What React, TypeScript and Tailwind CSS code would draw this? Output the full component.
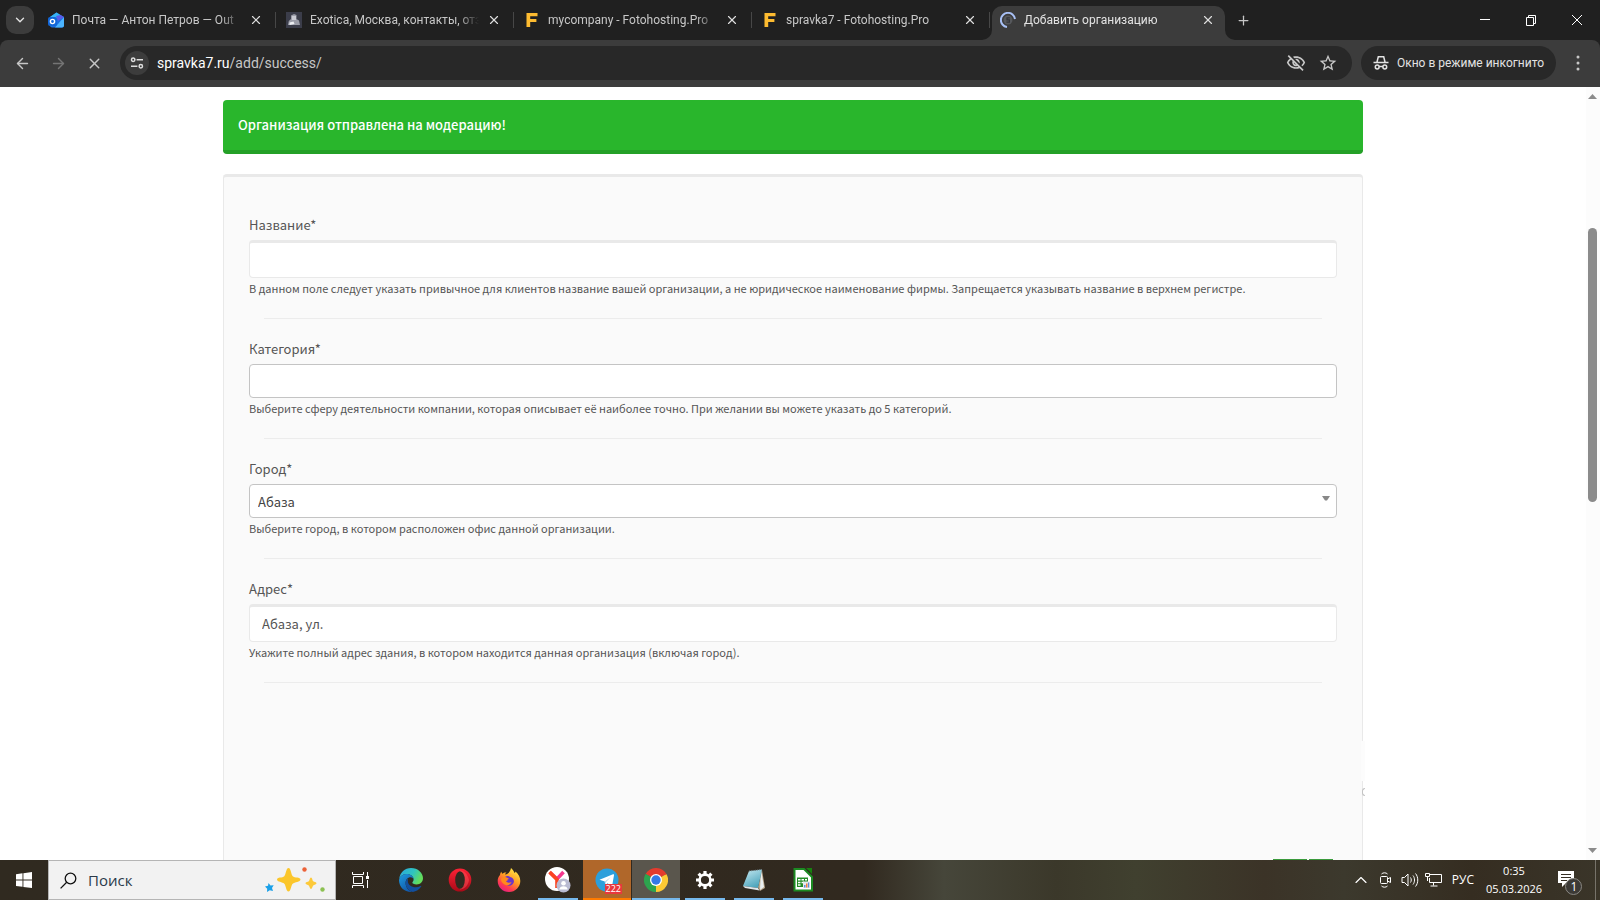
import type { ReactNode } from 'react';
import { ArrowLeft, ArrowRight, ChevronDown, ChevronUp, Plus, X } from 'lucide-react';
import { MdOutlineVisibilityOff, MdStarOutline } from 'react-icons/md';

/* ── Tab icons ─────────────────────────────────────────── */

function MailIcon() {
  return (
    <svg width="16" height="16" viewBox="0 0 16 16" aria-hidden="true">
      <path d="M2 5 8.5.6 16 5v8.5a2 2 0 0 1-2 2H4a2 2 0 0 1-2-2z" fill="#1b6fe0" />
      <path d="M2 5 8.5.6 13 3.4 5 9z" fill="#36b5f5" />
      <path d="M16 5v8.5a2 2 0 0 1-2 2H7z" fill="#4bb4ff" />
      <path d="m8 4 4.5-1L16 5l-6 4z" fill="#5a5be8" />
      <rect x="0" y="5" width="9" height="9" rx="2" fill="#1166d8" />
      <circle cx="4.5" cy="9.5" r="2.1" fill="none" stroke="#fff" strokeWidth="1.4" />
    </svg>
  );
}

function ExoticaIcon() {
  return (
    <svg width="16" height="16" viewBox="0 0 16 16" aria-hidden="true">
      <rect width="16" height="16" fill="#3b3d4a" />
      <path d="M5 3.5 8 2l2.5 1v4L13 8.5 14 13H2l.8-4L5 7z" fill="#9b9da8" />
      <path d="M6 4h4v4H6z" fill="#c9cad2" />
      <path d="m3.5 10.5 4-1 1 2.5-5 1z" fill="#eceef2" />
    </svg>
  );
}

function FotoIcon() {
  return (
    <svg width="16" height="16" viewBox="0 0 16 16" aria-hidden="true">
      <path d="M2.5 1h11v3.2H6.2v2.7h6.2v3H6.2V15H2.5z" fill="#fdbb30" />
    </svg>
  );
}

function LoadingIcon() {
  return (
    <svg width="16" height="16" viewBox="0 0 16 16" aria-hidden="true">
      <circle cx="8" cy="8" r="4.5" fill="#56585c" />
      <path d="M9.8 5.8H7v2h2.4v2.4H6.4" fill="none" stroke="#33353a" strokeWidth="1.2" />
      <path d="M7 15A7.1 7.1 0 1 1 15 7" fill="none" stroke="#a8c0f5" strokeWidth="2" />
    </svg>
  );
}

const TABS: { title: string; icon: ReactNode; active?: boolean }[] = [
  { title: 'Почта — Антон Петров — Out', icon: <MailIcon /> },
  { title: 'Exotica, Москва, контакты, отз', icon: <ExoticaIcon /> },
  { title: 'mycompany - Fotohosting.Pro', icon: <FotoIcon /> },
  { title: 'spravka7 - Fotohosting.Pro', icon: <FotoIcon /> },
  { title: 'Добавить организацию', icon: <LoadingIcon />, active: true },
];

function Tab({ title, icon, active }: { title: string; icon: ReactNode; active?: boolean }) {
  return (
    <div className="relative flex w-[238px] min-w-0 items-end px-[2px]">
      {active && (
        <svg
          className="absolute -left-2 bottom-0"
          width="254"
          height="34"
          viewBox="0 0 254 34"
          aria-hidden="true"
        >
          <path
            d="M0 34a10 10 0 0 0 10-10V10A10 10 0 0 1 20 0h213a10 10 0 0 1 10 10v14a10 10 0 0 0 10 10z"
            fill="#3c3c3c"
          />
        </svg>
      )}
      <div className="relative flex h-10 w-full items-center pr-[11px] pl-2">
        {icon}
        <span
          className={`ml-2 flex-1 overflow-hidden text-xs leading-5 whitespace-nowrap [mask-image:linear-gradient(to_right,black_88%,transparent)] ${
            active ? 'text-[#e3e3e3]' : 'text-[#c7c7c7]'
          }`}
        >
          {title}
        </span>
        <button type="button" aria-label="Закрыть вкладку" className="ml-2 text-[#dedede]">
          <X size={14} strokeWidth={2} />
        </button>
      </div>
      {!active && <span className="absolute right-0 bottom-3 h-4 w-px bg-[#474747]" />}
    </div>
  );
}

function TabStrip() {
  return (
    <header className="flex h-10 shrink-0 items-center bg-[#202020] font-['Roboto',sans-serif] text-[#e3e3e3]">
      <button
        type="button"
        aria-label="Поиск вкладок"
        className="ml-[6px] flex h-7 w-7 items-center justify-center rounded-[10px] bg-[#3c3c3c]"
      >
        <ChevronDown size={14} strokeWidth={2.4} />
      </button>
      <div className="ml-1 flex h-10">
        {TABS.map((tab) => (
          <Tab key={tab.title} {...tab} />
        ))}
      </div>
      <button type="button" aria-label="Новая вкладка" className="ml-[6px] p-[2px] text-[#c7c7c7]">
        <Plus size={15} strokeWidth={2} />
      </button>
      <div className="ml-auto flex h-full text-white">
        <button type="button" aria-label="Свернуть" className="flex w-[46px] items-center justify-center">
          <svg width="10" height="10" viewBox="0 0 10 10">
            <path d="M0 4.5h10" stroke="currentColor" />
          </svg>
        </button>
        <button type="button" aria-label="Восстановить" className="flex w-[46px] items-center justify-center">
          <svg width="12" height="12" viewBox="0 0 12 12" fill="none" stroke="currentColor">
            <path d="M1.5 3.5h7v8h-7zM3.5 3.5v-2h7v8h-2" />
          </svg>
        </button>
        <button type="button" aria-label="Закрыть" className="flex w-[46px] items-center justify-center">
          <svg width="12" height="12" viewBox="0 0 12 12">
            <path d="m1 1 10 10M11 1 1 11" stroke="currentColor" />
          </svg>
        </button>
      </div>
    </header>
  );
}

function Toolbar() {
  return (
    <div className="bg-[#202020] font-['Roboto',sans-serif]">
      <div className="flex h-[47px] items-center rounded-t-lg bg-[#3c3c3c] pb-px text-[#c7c7c7]">
        <div className="flex w-[120px] items-center">
          <button type="button" aria-label="Назад" className="ml-1 flex w-9 justify-center">
            <ArrowLeft size={17} strokeWidth={2} />
          </button>
          <button type="button" aria-label="Вперёд" className="flex w-9 justify-center text-[#757575]">
            <ArrowRight size={17} strokeWidth={2} />
          </button>
          <button type="button" aria-label="Остановить загрузку" className="flex w-9 justify-center">
            <X size={17} strokeWidth={2} />
          </button>
        </div>
        <div className="flex h-[34px] min-w-0 flex-1 items-center rounded-full bg-[#282828] pr-[14px] pl-[5px]">
          <button
            type="button"
            aria-label="Сведения о сайте"
            className="flex h-6 w-6 items-center justify-center rounded-full bg-[#3c3c3c] text-[#dedede]"
          >
            <svg width="14" height="14" viewBox="0 0 14 14" fill="none" stroke="currentColor" strokeWidth="1.5">
              <circle cx="3.2" cy="3.8" r="1.7" />
              <path d="M6.6 3.8H13M1 10.2h6.4" />
              <circle cx="10.8" cy="10.2" r="1.7" />
            </svg>
          </button>
          <div className="ml-2 flex-1 text-sm leading-5 text-[#c7c7c7]">
            <span className="text-white">spravka7.ru</span>/add/success/
          </div>
          <button type="button" aria-label="Сторонние файлы cookie">
            <MdOutlineVisibilityOff size={20} />
          </button>
          <button type="button" aria-label="Добавить в закладки" className="ml-3">
            <MdStarOutline size={20} />
          </button>
        </div>
        <div className="ml-[9px] flex h-[34px] items-center rounded-full bg-[#282828] px-3 text-[#e3e3e3]">
          <svg width="16" height="16" viewBox="0 0 16 16" fill="none" stroke="currentColor" strokeWidth="1.5">
            <path d="M.5 7.500h15M4 7 5.300 1.800h5.400L12 7" />
            <circle cx="4.200" cy="12" r="1.900" />
            <circle cx="11.800" cy="12" r="1.900" />
            <path d="M6 11.500h4" />
          </svg>
          <span className="ml-2 text-xs leading-5">Окно в режиме инкогнито</span>
        </div>
        <button type="button" aria-label="Меню" className="flex w-11 justify-center">
          <svg width="4" height="16" viewBox="0 0 4 16" fill="currentColor">
            <circle cx="2" cy="2" r="1.5" />
            <circle cx="2" cy="8" r="1.5" />
            <circle cx="2" cy="14" r="1.5" />
          </svg>
        </button>
      </div>
    </div>
  );
}

/* ── Page content ──────────────────────────────────────── */

function Field({
  id,
  label,
  help,
  children,
}: {
  id: string;
  label: string;
  help: string;
  children: ReactNode;
}) {
  return (
    <div>
      <label htmlFor={id} className="mb-[5px] block text-[13px] leading-5">
        {label}
      </label>
      {children}
      <p className="text-[11px] leading-5">{help}</p>
      <hr className="mx-[15px] my-5 border-[#ececec]" />
    </div>
  );
}

function Page() {
  return (
    <main className="flex min-h-0 flex-1 bg-white text-[#555]">
      <div className="flex min-w-0 flex-1 flex-col overflow-hidden pt-[13px]">
        <div className="mx-auto flex min-h-0 w-full max-w-[1140px] flex-1 flex-col">
          <div
            role="alert"
            className="mb-5 h-[54px] shrink-0 rounded border-b-4 border-[#24a027] bg-[#29b62c] px-[15px] pt-[15px] text-[13px] leading-5 font-medium text-white"
          >
            Организация отправлена на модерацию!
          </div>

          <form className="relative flex min-h-0 flex-1 flex-col rounded-t border border-t-[3px] border-b-0 border-[#e9e9e9] bg-[#fafafa] px-[25px] pt-[38px]">
            <Field
              id="name"
              label="Название*"
              help="В данном поле следует указать привычное для клиентов название вашей организации, а не юридическое наименование фирмы. Запрещается указывать название в верхнем регистре."
            >
              <input
                id="name"
                className="block h-[38px] w-full rounded border border-t-[3px] border-[#e9e9e9] bg-white px-3 pb-[2px] text-[13px] outline-none"
              />
            </Field>
            <Field
              id="category"
              label="Категория*"
              help="Выберите сферу деятельности компании, которая описывает её наиболее точно. При желании вы можете указать до 5 категорий."
            >
              <input
                id="category"
                className="block h-[34px] w-full rounded border border-[#c4c4c4] bg-white px-2 text-[13px] outline-none"
              />
            </Field>
            <Field id="city" label="Город*" help="Выберите город, в котором расположен офис данной организации.">
              <div className="relative">
                <select
                  id="city"
                  defaultValue="abaza"
                  className="block h-[34px] w-full appearance-none rounded border border-[#c4c4c4] bg-white px-2 pt-[2px] text-[13px] text-[#444] outline-none"
                >
                  <option value="abaza">Абаза</option>
                </select>
                <svg className="absolute top-3 right-[7px]" width="8" height="5" viewBox="0 0 8 5" aria-hidden="true">
                  <path d="M0 0h8L5 4.5H3z" fill="#888" />
                </svg>
              </div>
            </Field>
            <Field
              id="address"
              label="Адрес*"
              help="Укажите полный адрес здания, в котором находится данная организация (включая город)."
            >
              <input
                id="address"
                defaultValue="Абаза, ул."
                className="block h-[38px] w-full rounded border border-t-[3px] border-[#e9e9e9] bg-white px-3 pb-[2px] text-[13px] outline-none"
              />
            </Field>

            {/* Top edge of the map controls, cut off by the viewport */}
            <div className="mt-auto flex justify-end gap-[2px] pr-1" aria-hidden="true">
              <span className="h-px w-[34px] bg-[#3a9a3c]" />
              <span className="h-px w-6 bg-[#3a9a3c]" />
            </div>

            {/* Sliver of the captcha badge over the panel border */}
            <div className="absolute -right-[3px] bottom-[79px] h-10 w-1 bg-[#fcfcfc]" />
            <div className="absolute -right-[3px] bottom-16 h-2 w-[3px] rounded-l-full border border-r-0 border-[#c4c4c4]" />
          </form>
        </div>
      </div>

      {/* Scrollbar */}
      <div
        className="flex w-[14px] shrink-0 flex-col items-center justify-between bg-[#fcfcfc] py-[7px] pr-px"
        aria-hidden="true"
      >
        <svg width="9" height="5" viewBox="0 0 9 5">
          <path d="M4.5 0 9 5H0z" fill="#8b8b8b" />
        </svg>
        <div className="flex w-[9px] flex-1 flex-col pt-[129px] pb-[346px]">
          <div className="flex-1 rounded-full bg-[#8b8b8b]" />
        </div>
        <svg width="9" height="5" viewBox="0 0 9 5">
          <path d="M4.5 5 9 0H0z" fill="#8b8b8b" />
        </svg>
      </div>
    </main>
  );
}

/* ── Taskbar ───────────────────────────────────────────── */

function TaskViewIcon() {
  return (
    <svg width="17" height="16" viewBox="0 0 17 16" fill="none" stroke="#fff" aria-hidden="true">
      <path d="M.5 0v2.5h11V0M.5 16v-2.5h11V16M1.5 4.5h9v7h-9zM15.5 0v4M15.5 8v8" />
      <path d="M14 4h3v3h-3z" fill="#fff" stroke="none" />
    </svg>
  );
}

function EdgeIcon() {
  return (
    <svg width="24" height="24" viewBox="0 0 24 24" aria-hidden="true">
      <defs>
        <linearGradient id="edgeTop" x1="0" y1="0" x2="1" y2=".4">
          <stop offset="0" stopColor="#2aa6e0" />
          <stop offset=".6" stopColor="#2fc4c0" />
          <stop offset="1" stopColor="#63dd5c" />
        </linearGradient>
        <linearGradient id="edgeLow" x1="0" y1="0" x2=".6" y2="1">
          <stop offset="0" stopColor="#1d9be0" />
          <stop offset="1" stopColor="#1257a8" />
        </linearGradient>
      </defs>
      <path d="M.2 11C.9 4.6 5.8 0 12 0c7 0 12 5 12 10.3 0 3.6-2.8 6.2-6.3 6.2-2.8 0-4.4-.9-4.4-1.9 0-.8 1.3-1.2 1.3-3.2C14.6 8.5 11.5 6 7.8 6 4 6 1.2 8 .2 11z" fill="url(#edgeTop)" />
      <path d="M.2 11C1.2 8 4 6 7.8 6c3.7 0 6.800 2.400 6.800 5.300-.5-1.300-1.700-2-3-2-3.100 0-5 2.600-5 5.600 0 4.200 3 7.900 7.200 9C6 24.800.2 19.500 0 12.500z" fill="url(#edgeLow)" />
      <path d="M9 10.500c-1.600 1-2.400 2.700-2.400 4.500 0 4.200 3.200 7.800 7.200 8.900 3.300-.4 6.600-2.400 8.400-5.400.4-.6-.2-.8-.6-.5-5.600 2.900-12.800.5-12.800-5.300 0-.8.100-1.500.2-2.200z" fill="#124f9e" />
    </svg>
  );
}

function OperaIcon() {
  return (
    <svg width="24" height="24" viewBox="0 0 24 24" aria-hidden="true">
      <defs>
        <linearGradient id="opera" x1="0" y1="0" x2="0" y2="1">
          <stop offset="0" stopColor="#ff2235" />
          <stop offset="1" stopColor="#a80a18" />
        </linearGradient>
      </defs>
      <ellipse cx="12" cy="12" rx="11.3" ry="11.5" fill="url(#opera)" />
      <path d="M12 2.500c4 0 7.500 3.500 9 9.500-1 6-5 9.500-9 9.500z" fill="#ff5b5f" opacity=".45" />
      <ellipse cx="12" cy="12" rx="4.8" ry="8.8" fill="#302a20" />
    </svg>
  );
}

function FirefoxIcon() {
  return (
    <svg width="24" height="24" viewBox="0 0 24 24" aria-hidden="true">
      <defs>
        <linearGradient id="fox" x1=".8" y1="0" x2=".2" y2="1">
          <stop offset="0" stopColor="#fff04a" />
          <stop offset=".45" stopColor="#ff9a22" />
          <stop offset=".75" stopColor="#ff3b50" />
          <stop offset="1" stopColor="#e01a8a" />
        </linearGradient>
      </defs>
      <path d="M3 7c.2-1.600.8-2.600 1.400-3.200.2 1 .5 1.500 1 2C6.500 4.800 8 4.300 9.500 4.500c-.9.600-1.400 1.300-1.500 2 3-.5 5-2 6-6.500 1.800 1.500 3 3.500 3.500 5 .6-.2.900-.7 1-1.500C21.500 6 23.300 9 23.300 13c0 6-5 11-11.300 11S.7 19.200.7 13C.7 10.500 1.500 8.500 3 7z" fill="url(#fox)" />
      <path d="M8 9c1.500-1.500 4-1.500 5 0 3 .5 4.500 3 3.700 5.500-.8 2.500-3.400 3.700-5.700 3-2.500-.8-3.700-3-3-5 .8.600 1.900.7 3 0-1.500-.4-2.700-1.500-3-3.500z" fill="#6a35c9" />
      <path d="M4 11c1-2 3-2.500 5-1.800l2.800 1.300c-.4 1.500-2.300 1.300-2.800 2.500 1 2 3.500 2 5.500 1-1 3-4.500 4-7 2.500C5 15 4 13.200 4 11z" fill="#ff8a1c" />
    </svg>
  );
}

function YandexIcon() {
  return (
    <svg width="26" height="26" viewBox="0 0 26 26" aria-hidden="true">
      <circle cx="12" cy="12" r="12" fill="#fff" />
      <path d="m5 5.500 7 6.500 6.500-7" fill="none" stroke="#f5388f" strokeWidth="3.6" />
      <path d="m4.500 5 7.500 7.500V21" fill="none" stroke="#fb4420" strokeWidth="3.6" />
      <circle cx="18.5" cy="18.5" r="7" fill="#b9bbd2" />
      <circle cx="18.5" cy="16.3" r="2.3" fill="#fff" />
      <path d="M14.300 22.500c0-4.500 8.400-4.500 8.400 0z" fill="#fff" />
    </svg>
  );
}

function TelegramIcon() {
  return (
    <svg width="24" height="24" viewBox="0 0 24 24" aria-hidden="true">
      <circle cx="12" cy="12" r="11.5" fill="#2c9fdb" />
      <path d="m4.500 11.700 13.500-5.500c.7-.2 1.200.2 1 1L17 18.500l-4.500-3.300-2.300 2.200-.4-4z" fill="#fff" />
      <path d="m9.800 13.400 6-4.500-4.700 5.100-.9 3.400z" fill="#b5d9ee" />
    </svg>
  );
}

function ChromeIcon() {
  return (
    <svg width="24" height="24" viewBox="0 0 24 24" aria-hidden="true">
      <path d="M12 12 1.600 6A12 12 0 0 1 22.400 6z" fill="#e33b2e" />
      <path d="M12 12V24A12 12 0 0 1 1.600 6z" fill="#2da44e" />
      <path d="m1.600 6 5.200 9L12 12z" fill="#2da44e" />
      <path d="M12 12 22.400 6A12 12 0 0 1 12 24z" fill="#fcc934" />
      <path d="m12 24 5.200-9L12 12z" fill="#fcc934" />
      <path d="M12 6.500h10.700L22.400 6H12z" fill="#e33b2e" />
      <circle cx="12" cy="12" r="6" fill="#fff" />
      <circle cx="12" cy="12" r="4.7" fill="#3479e8" />
    </svg>
  );
}

function GearIcon() {
  return (
    <svg width="20" height="20" viewBox="0 0 20 20" fill="none" stroke="#fff" aria-hidden="true">
      <circle cx="10" cy="10" r="5.4" strokeWidth="2.6" />
      <path
        d="M10 1v3M10 16v3M1 10h3M16 10h3M3.600 3.600l2.200 2.200M14.200 14.200l2.200 2.200M3.600 16.400l2.200-2.200M14.200 5.800l2.200-2.200"
        strokeWidth="3.2"
      />
    </svg>
  );
}

function NotepadIcon() {
  return (
    <svg width="24" height="24" viewBox="0 0 24 24" aria-hidden="true">
      <defs>
        <linearGradient id="note" x1="0" y1="0" x2=".5" y2="1">
          <stop offset="0" stopColor="#c7eaf2" />
          <stop offset="1" stopColor="#4fa6bd" />
        </linearGradient>
      </defs>
      <path d="m20 2 3 18-5 3-2-4z" fill="#b9a78c" />
      <path d="m19 2 3 17-4 3z" fill="#e8eef0" />
      <path d="M7 3 20 1.500 16 20 1 18z" fill="url(#note)" />
      <path d="m1 18 15 2 1.500 2.500L3 20z" fill="#dfe5e8" />
      <path d="M7 3 20 1.500" stroke="#6b7a80" strokeDasharray="1 1" />
    </svg>
  );
}

function CalcIcon() {
  return (
    <svg width="22" height="24" viewBox="0 0 22 24" aria-hidden="true">
      <path d="M2.500 1h9.500l8 8v13.500H2.500z" fill="#fff" stroke="#1c8a22" strokeWidth="2" />
      <path d="M14 0h6v6z" fill="#17800f" />
      <path d="M5 9.500h11V19H5z" fill="#238c26" />
      <path d="M6 11h2.500v1.500H6zm3.500 0H12v1.500H9.500zm3.500 0h2v1.500h-2zM6 13.700h2.500v1.500H6zm3.500 0H12v1.500H9.500zM6 16.300h2.500v1.500H6z" fill="#fff" />
      <path d="M11 13.500h7V20h-7z" fill="#e7e9ee" />
      <path d="M12 17h1.500v2.500H12z" fill="#5b8ddb" />
      <path d="M14 15.500h1.500v4H14z" fill="#f0803c" />
      <path d="M16 14.500h1.200v5H16z" fill="#5b8ddb" />
    </svg>
  );
}

const APPS: { name: string; icon: ReactNode; cell?: string; line?: string; badge?: string }[] = [
  { name: 'Microsoft Edge', icon: <EdgeIcon /> },
  { name: 'Opera', icon: <OperaIcon /> },
  { name: 'Firefox', icon: <FirefoxIcon /> },
  { name: 'Яндекс Браузер', icon: <YandexIcon />, line: 'w-10 bg-[#76b9ed]' },
  { name: 'Telegram', icon: <TelegramIcon />, cell: 'bg-[#b0672a]', line: 'w-12 bg-[#ff7b00]', badge: '222' },
  { name: 'Google Chrome', icon: <ChromeIcon />, cell: 'bg-[#5a564d]', line: 'w-12 bg-[#76b9ed]' },
  { name: 'Параметры', icon: <GearIcon />, line: 'w-10 bg-[#76b9ed]' },
  { name: 'Блокнот', icon: <NotepadIcon />, line: 'w-10 bg-[#76b9ed]' },
  { name: 'LibreOffice Calc', icon: <CalcIcon />, line: 'w-10 bg-[#76b9ed]' },
];

function SearchSparkles() {
  return (
    <svg width="60" height="26" viewBox="0 0 60 26" aria-hidden="true">
      <path
        d="M23.500 1c2.500 0 2.500 6.500 4.200 8.200S35.500 10 35.500 12.500s-6 2.500-7.800 4.200-1.700 7.800-4.200 7.800-2.500-6-4.200-7.800-7.300-1.700-7.300-4.200 5.600-1.600 7.300-3.300S21 1 23.500 1z"
        fill="#fbc62b"
      />
      <path
        d="M46 10.500c1.300 0 1.300 2.900 2.200 3.800s3.300.7 3.300 2-2.400 1.300-3.300 2.200-.9 3.500-2.200 3.500-1.300-2.600-2.200-3.500-3.300-.9-3.300-2.200 2.400-1.100 3.300-2 .9-3.800 2.200-3.800z"
        fill="#fcc93a"
      />
      <path d="m3.500 16 2 2.500 3.200-.2-1.700 2.800 1 3-3.200-.8L2 25l.2-3.200L0 19.500l3-.7z" fill="#1ba0e8" />
      <circle cx="39.5" cy="2.5" r="2.2" fill="#ec6238" />
      <circle cx="57.5" cy="22.5" r="2.2" fill="#8cc152" />
    </svg>
  );
}

function Taskbar() {
  return (
    <footer className="flex h-10 shrink-0 items-stretch bg-[linear-gradient(90deg,#302a20_0%,#31291f_54%,#46463a_59%,#3b382a_66%,#40402f_71%,#3b3327_79%,#3c392d_84%,#352d21_92%,#3a3529_100%)] font-['Open_Sans',sans-serif] text-white">
      <button type="button" aria-label="Пуск" className="flex w-12 items-center justify-center">
        <svg width="16" height="16" viewBox="0 0 16 16" fill="#fff">
          <path d="M0 2.200 6.500 1.300V7.600H0zM7.400 1.200 16 0V7.600H7.400zM0 8.500H6.500V14.800L0 13.900zM7.400 8.500H16V16L7.400 14.900z" />
        </svg>
      </button>
      <label className="flex w-72 items-center border border-[#b5b5b5] bg-[#f2f2f2] pr-[10px] pl-[11px]">
        <svg width="17" height="17" viewBox="0 0 17 17" fill="none" stroke="#111" strokeWidth="1.3">
          <circle cx="10.5" cy="6.5" r="5.3" />
          <path d="M6.700 10.300.6 16.400" />
        </svg>
        <input
          aria-label="Поиск"
          placeholder="Поиск"
          className="ml-[11px] min-w-0 flex-1 bg-transparent text-[15px] leading-5 outline-none placeholder:text-[#2b3a4a]"
        />
        <SearchSparkles />
      </label>
      <button type="button" aria-label="Представление задач" className="flex w-12 items-center justify-center">
        <TaskViewIcon />
      </button>
      <nav className="ml-[3px] flex gap-px">
        {APPS.map((app) => (
          <button
            key={app.name}
            type="button"
            aria-label={app.name}
            className={`relative flex w-12 items-center justify-center ${app.cell ?? ''}`}
          >
            {app.icon}
            {app.badge && (
              <span className="absolute right-[9px] bottom-[6px] bg-[#e8383d] px-px text-[9px] leading-[10px]">
                {app.badge}
              </span>
            )}
            {app.line && <span className={`absolute bottom-0 h-[2px] ${app.line}`} />}
          </button>
        ))}
      </nav>

      <div className="ml-auto flex items-center">
        <ChevronUp size={20} strokeWidth={1.4} />
        <svg className="ml-2" width="14" height="16" viewBox="0 0 14 16" fill="none" stroke="#fff">
          <rect x="1.5" y="4.5" width="7" height="7" rx="1" />
          <path d="m8.500 7 3-1.500v5L8.500 9M2.500 2C4 .4 7 .4 8.500 2M2.500 14c1.500 1.600 4.500 1.600 6 0" />
        </svg>
        <svg className="ml-2" width="18" height="16" viewBox="0 0 18 16" fill="none" stroke="#fff">
          <path d="M1 5.500h2.500L7 2v12l-3.500-3.500H1zM9.500 5.500c1 1.500 1 3.500 0 5M12 3.500c2 2.500 2 6.500 0 9M14.500 1.500c3 3.500 3 9.500 0 13" />
        </svg>
        <svg className="ml-[6px]" width="17" height="16" viewBox="0 0 17 16" fill="none" stroke="#fff">
          <path d="M5 2.500h11.500v8h-12V6M8.500 10.500v3M5.500 14h7M.5 1.500h4v3h-4zM2.500 4.500V9" />
        </svg>
        <span className="ml-[10px] text-xs leading-[18px]">РУС</span>
        <time className="flex w-20 flex-col items-center text-[11px] leading-[18px]">
          <span>0:35</span>
          <span>05.03.2026</span>
        </time>
        <button type="button" aria-label="Уведомления" className="relative mt-[6px] mr-[13px] h-7 w-7">
          <svg width="28" height="28" viewBox="0 0 28 28" fill="none">
            <path d="M4 2h16v12h-8l-4 4v-4H4z" fill="#fff" />
            <path d="M7 5.500h10M7 8.500h10M7 11.500h6" stroke="#352f24" />
            <circle cx="19.5" cy="17.5" r="8" fill="#3c3a36" stroke="#8a8883" />
          </svg>
          <span className="absolute right-0 bottom-[2px] w-4 text-center text-xs leading-4">1</span>
        </button>
        <span className="mr-1 h-10 w-px bg-[#77736a]" />
      </div>
    </footer>
  );
}

export default function App() {
  return (
    <div className="flex h-screen flex-col overflow-hidden font-['Noto_Sans_CJK_SC',sans-serif]">
      <TabStrip />
      <Toolbar />
      <Page />
      <Taskbar />
    </div>
  );
}
